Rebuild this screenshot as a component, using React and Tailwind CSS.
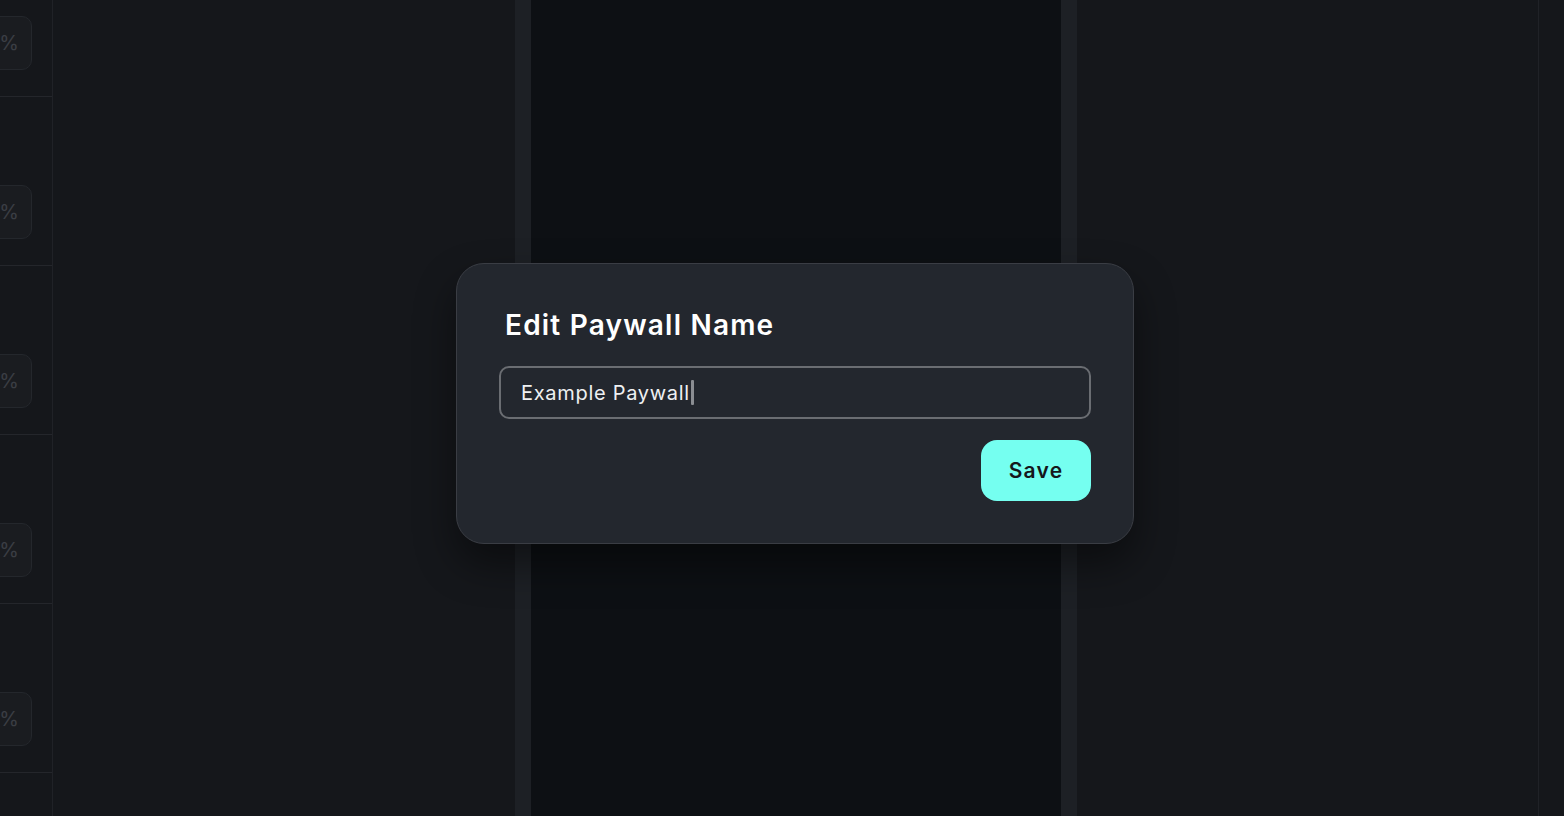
import React from 'react';

const rows = [0, 1, 2, 3, 4];

function SidePanel() {
  return (
    <div className="w-[53px] shrink-0 border-r border-[#202227] overflow-hidden">
      <div className="-mt-[72px] flex flex-col">
        {rows.map(i => (
          <div key={i} className="h-[169px] flex flex-col border-b border-[#24262b]">
            <div className="h-[88px]" />
            <div className="-ml-[30px] w-[62px] h-[54px] rounded-[10px] border border-[#24272c] bg-[#1a1c20] flex items-center justify-end pr-[12px] text-[20px] text-[#3b3e44]">
              %
            </div>
          </div>
        ))}
      </div>
    </div>
  );
}

export default function App() {
  return (
    <div className="relative h-[816px] w-full overflow-hidden bg-[#15171b] flex" style={{ fontFamily: 'Inter, "Noto Sans", sans-serif' }}>
      <SidePanel />
      <div className="flex-1" />
      <div className="w-[16px] shrink-0 bg-[#1d2025]" />
      <div className="w-[530px] shrink-0 bg-[#0d1014]" />
      <div className="w-[16px] shrink-0 bg-[#1d2025]" />
      <div className="flex-1" />
      <div className="w-[26px] shrink-0 border-l border-[#202227]" />

      <div className="absolute left-[456px] top-[263px] w-[678px] h-[281px] rounded-[28px] border border-[#3a3d44] bg-[#23272e] shadow-[0_20px_40px_rgba(0,0,0,0.45)] px-[42px] pt-[42px]">
        <h2 className="pl-[6px] text-[28px] leading-[38px] font-semibold text-white tracking-[1.2px]">Edit Paywall Name</h2>
        <div className="mt-[22px] h-[53px] rounded-[10px] border-2 border-[#6a6d72] flex items-center pl-[20px] text-[20px] text-[#eef0f2] tracking-[0.7px]">
          <span>Example Paywall</span>
          <span className="ml-[1px] w-[3px] h-[25px] bg-[#8a8d92] rounded-[1px]" />
        </div>
        <div className="mt-[21px] flex justify-end">
          <button className="w-[110px] h-[61px] rounded-[16px] bg-[#75fff0] text-[21px] font-semibold text-[#15171b] tracking-[1.2px]">Save</button>
        </div>
      </div>
    </div>
  );
}
